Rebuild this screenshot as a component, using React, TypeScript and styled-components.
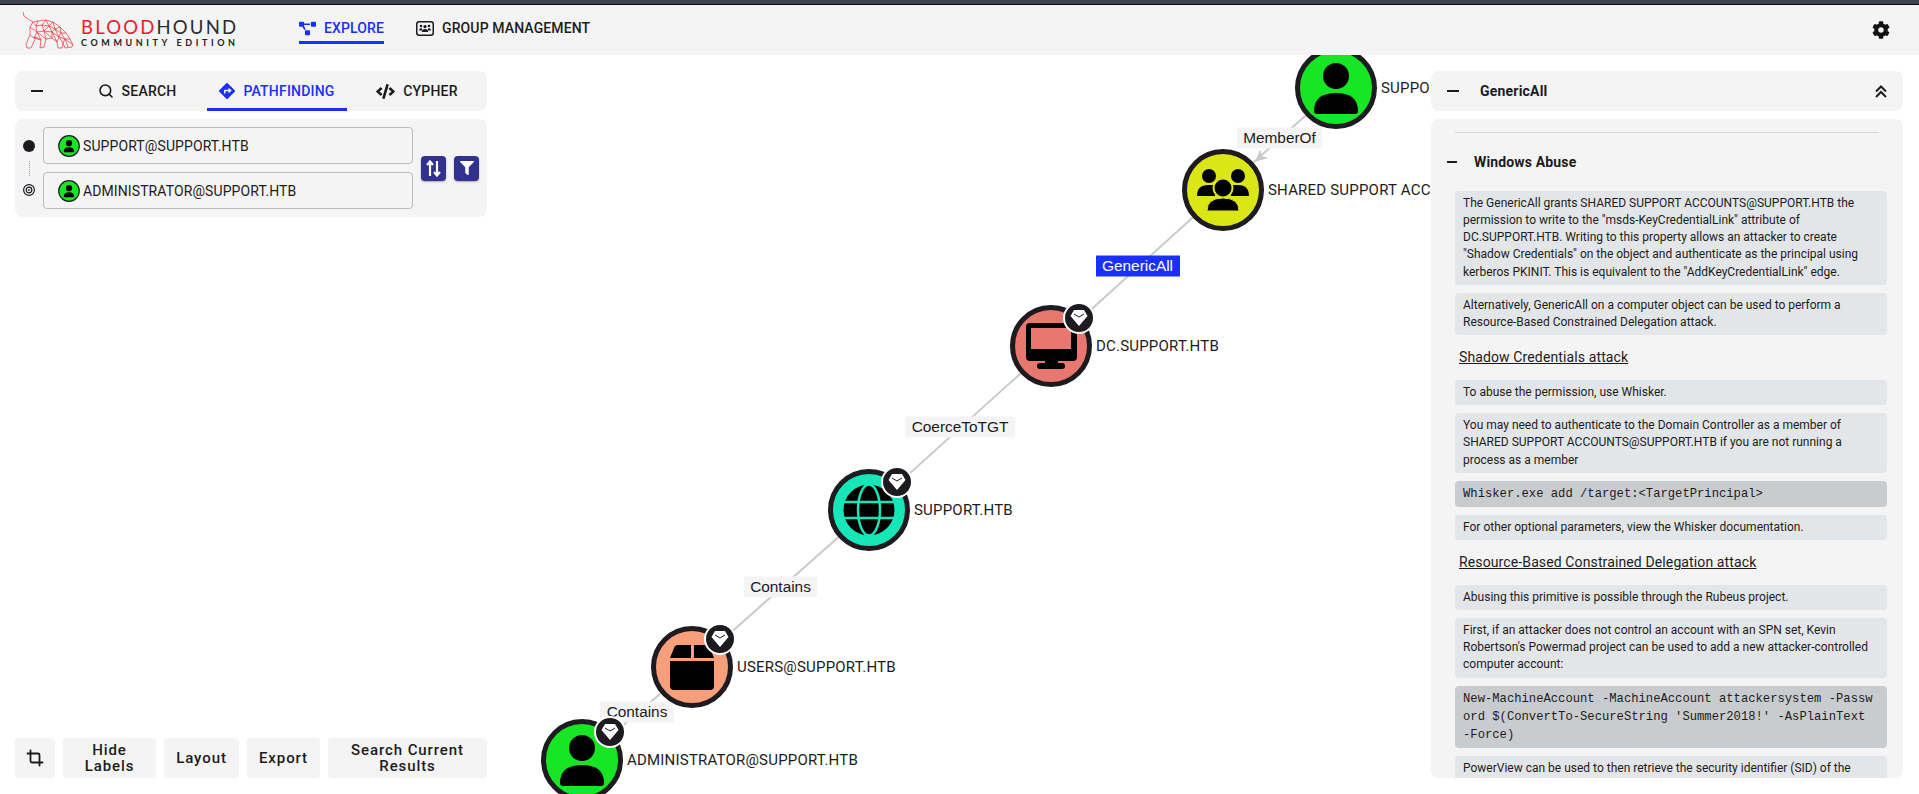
import React from 'react';
import styled, { createGlobalStyle } from 'styled-components';
import { FaCog, FaDirections, FaCode, FaProjectDiagram, FaFilter } from 'react-icons/fa';
import { Search, Crop } from 'lucide-react';

const Global = createGlobalStyle`
  html, body { margin: 0; padding: 0; background: #fff; }
  body { font-family: Roboto, "Liberation Sans", sans-serif; color: #1d1b20; }
  * { box-sizing: border-box; }
`;

const Page = styled.div`
  position: relative;
  width: 100%;
  height: 100vh;
  overflow: hidden;
  display: flex;
  flex-direction: column;
`;
const WindowEdge = styled.div`
  height: 5px;
  flex: none;
  background: #3f444c;
  border-bottom: 1px solid #0c0c0e;
`;
const Header = styled.header`
  height: 50px;
  flex: none;
  background: #f4f4f4;
  display: flex;
  align-items: center;
  position: relative;
  z-index: 5;
  padding: 0 29px 0 22px;
`;
const LogoBox = styled.div`
  display: flex;
  align-items: center;
  gap: 7px;
  width: 277px;
  flex: none;
  margin-top: -1px;
`;
const LogoText = styled.div`
  display: flex;
  flex-direction: column;
  margin-top: 6px;
  font-family: Lato, "Liberation Sans", sans-serif;
`;
const LogoMain = styled.div`
  font-size: 18.5px;
  line-height: 19px;
  letter-spacing: 2.2px;
  color: #2b2b2f;
  white-space: nowrap;
  span { color: #e8202e; }
`;
const LogoSub = styled.div`
  font-size: 9px;
  line-height: 11px;
  font-weight: 700;
  letter-spacing: 3.6px;
  color: #222;
  white-space: nowrap;
`;
const Nav = styled.nav`
  display: flex;
  align-items: stretch;
  align-self: flex-start;
  gap: 32px;
  height: 32px;
  margin-top: 7px;
  flex: 1;
`;
const NavItem = styled.div<{ $active?: boolean }>`
  display: flex;
  align-items: center;
  gap: 8px;
  padding-top: 3px;
  font-size: 14px;
  font-weight: 500;
  letter-spacing: 0.12px;
  white-space: nowrap;
  color: ${p => (p.$active ? '#1a30ff' : '#1d1b20')};
  border-bottom: 3px solid ${p => (p.$active ? '#1a30ff' : 'transparent')};
  svg { flex: none; }
`;
const GearSlot = styled.div`
  display: flex;
  align-items: center;
  color: #111;
  margin-top: -1px;
`;

const Stage = styled.main`
  position: relative;
  flex: 1;
  overflow: hidden;
`;
const EdgeLayer = styled.svg`
  position: absolute;
  left: 0;
  top: 0;
  width: 100%;
  height: 100%;
`;
const EdgeLabel = styled.div<{ $x: number; $y: number; $active?: boolean }>`
  position: absolute;
  left: ${p => p.$x}px;
  top: ${p => p.$y - 55}px;
  transform: translate(-50%, -50%);
  height: 21px;
  line-height: 20px;
  padding: 0 6.5px;
  font-family: "Liberation Sans", Arial, sans-serif;
  font-size: 15.4px;
  white-space: nowrap;
  background: ${p => (p.$active ? '#1a30ff' : '#f4f4f4')};
  color: ${p => (p.$active ? '#fff' : '#1d1b20')};
`;
const NodeWrap = styled.div<{ $x: number; $y: number }>`
  position: absolute;
  left: ${p => p.$x - 41}px;
  top: ${p => p.$y - 55 - 41}px;
  display: flex;
  align-items: center;
  gap: 4px;
`;
const NodeGlyph = styled.svg`
  width: 82px;
  height: 82px;
  flex: none;
  overflow: visible;
`;
const NodeLabel = styled.span`
  font-size: 15px;
  letter-spacing: 0.2px;
  white-space: nowrap;
  color: #1d1b20;
`;

const Column = styled.div<{ $side: 'left' | 'right' }>`
  position: absolute;
  top: 16px;
  bottom: 16px;
  width: 472px;
  ${p => (p.$side === 'left' ? 'left: 15px;' : 'right: 16px;')}
  display: flex;
  flex-direction: column;
  gap: 8px;
  z-index: 3;
`;
const Card = styled.div`
  background: #f4f4f4;
  border-radius: 8px;
`;
const TabBar = styled(Card)`
  height: 40px;
  flex: none;
  display: flex;
  align-items: stretch;
`;
const MinusSlot = styled.div`
  width: 52px;
  flex: none;
  display: flex;
  align-items: center;
  padding-left: 16px;
`;
const Dash = styled.span<{ $w: number }>`
  display: block;
  width: ${p => p.$w}px;
  height: 2px;
  background: #1d1b20;
`;
const Tab = styled.div<{ $active?: boolean }>`
  flex: 1;
  display: flex;
  align-items: center;
  justify-content: center;
  gap: 8px;
  font-size: 14px;
  font-weight: 500;
  letter-spacing: 0.2px;
  white-space: nowrap;
  color: ${p => (p.$active ? '#1a30ff' : '#1d1b20')};
  border-bottom: 3px solid ${p => (p.$active ? '#1a30ff' : 'transparent')};
  padding-top: 3px;
`;
const SearchCard = styled(Card)`
  flex: none;
  display: flex;
  align-items: center;
  padding: 8px 0;
`;
const Rail = styled.div`
  width: 28px;
  flex: none;
  display: flex;
  flex-direction: column;
  align-items: center;
  gap: 8.5px;
`;
const StartDot = styled.span`
  width: 12px;
  height: 12px;
  border-radius: 50%;
  background: #1d1b20;
`;
const RailLine = styled.span`
  width: 0;
  height: 15px;
  border-left: 1px dotted #a0a0a0;
`;
const Fields = styled.div`
  width: 370px;
  flex: none;
  display: flex;
  flex-direction: column;
  gap: 8px;
`;
const Field = styled.div`
  height: 37px;
  display: flex;
  align-items: center;
  gap: 3px;
  padding-left: 14px;
  border: 1px solid #bcbcbc;
  border-radius: 4px;
  font-size: 14px;
  letter-spacing: 0.1px;
  white-space: nowrap;
`;
const FieldIcon = styled.svg`
  width: 22px;
  height: 22px;
  flex: none;
`;
const Actions = styled.div`
  display: flex;
  gap: 8px;
  margin-left: 8px;
`;
const ActionBtn = styled.div`
  width: 25px;
  height: 25px;
  border-radius: 4px;
  background: #33318f;
  color: #fff;
  display: flex;
  align-items: center;
  justify-content: center;
  box-shadow: 0 1px 2px rgba(0, 0, 0, 0.3);
`;
const Spacer = styled.div`
  flex: 1;
`;
const Toolbar = styled.div`
  display: flex;
  gap: 8px;
  flex: none;
`;
const ToolBtn = styled.div<{ $w: number }>`
  width: ${p => p.$w}px;
  height: 40px;
  background: #f4f4f4;
  border-radius: 4px;
  display: flex;
  align-items: center;
  justify-content: center;
  text-align: center;
  font-size: 15px;
  font-weight: 500;
  line-height: 16px;
  letter-spacing: 0.9px;
  padding: 0 16px;
`;

const DetailHead = styled(Card)`
  height: 40px;
  flex: none;
  display: flex;
  align-items: center;
  padding: 0 16px;
  font-size: 14px;
  font-weight: 700;
  letter-spacing: 0.2px;
`;
const HeadTitle = styled.span`
  flex: 1;
  margin-left: 21px;
`;
const DetailBody = styled(Card)`
  flex: 1;
  min-height: 0;
  overflow: hidden;
  padding: 13px 16px 0 24px;
`;
const Divider = styled.div`
  height: 1px;
  background: #d5d5d5;
  margin-right: 8px;
`;
const SectionHead = styled.div`
  height: 58px;
  display: flex;
  align-items: center;
  gap: 17px;
  margin-left: -8px;
  font-size: 14px;
  font-weight: 700;
  letter-spacing: 0.15px;
`;
const Content = styled.div`
  display: flex;
  flex-direction: column;
  gap: 8px;
`;
const Para = styled.p`
  margin: 0;
  padding: 4px 8px;
  background: #e3e6e9;
  border-radius: 4px;
  font-size: 12px;
  line-height: 17.16px;
`;
const Code = styled.pre`
  margin: 0;
  padding: 4px 8px;
  background: #c9cccf;
  border-radius: 4px;
  font-family: "Liberation Mono", monospace;
  font-size: 12.2px;
  line-height: 18px;
  white-space: pre-wrap;
  word-break: break-all;
`;
const SubHeading = styled.div`
  height: 29px;
  line-height: 29px;
  padding-left: 4px;
  font-size: 14px;
  letter-spacing: 0.12px;
  text-decoration: underline;
`;

const UserShape = () => (
  <g fill="#000">
    <circle cx="0" cy="-12" r="13" />
    <path d="M-22 23 Q-22 5 0 5 Q22 5 22 23 Q22 26 19 26 H-19 Q-22 26 -22 23Z" />
  </g>
);
const GroupShape = ({ fill }: { fill: string }) => (
  <g fill="#000">
    <circle cx="-14" cy="-14" r="7" />
    <circle cx="15" cy="-14" r="7" />
    <path d="M-26 6 Q-26 -5 -15 -5 H-8 V6Z" />
    <path d="M26 6 Q26 -5 15 -5 H8 V6Z" />
    <circle cx="0" cy="-2" r="9.5" stroke={fill} strokeWidth="2" />
    <path d="M-16 21 Q-16 8 0 8 Q16 8 16 21 Z" stroke={fill} strokeWidth="1" />
  </g>
);
const MonitorShape = ({ fill }: { fill: string }) => (
  <g>
    <rect x="-25" y="-23" width="51" height="38" rx="4" fill="#000" />
    <rect x="-20" y="-18" width="40" height="21" fill={fill} />
    <rect x="-6" y="14" width="13" height="5" fill="#000" />
    <rect x="-14" y="17" width="28" height="6" rx="3" fill="#000" />
  </g>
);
const BoxShape = () => (
  <g fill="#000">
    <path d="M-22 -9 L-18 -19 Q-17 -22 -14 -22 H-1 V-9Z" />
    <path d="M2 -22 H14 Q17 -22 18 -19 L22 -9 H2Z" />
    <path d="M-22 -6 H22 V19 Q22 23 18 23 H-18 Q-22 23 -22 19Z" />
  </g>
);
const GlobeShape = ({ fill }: { fill: string }) => (
  <g>
    <circle cx="0" cy="0" r="25.5" fill="#000" />
    <ellipse cx="0" cy="0" rx="11" ry="25.5" fill="none" stroke={fill} strokeWidth="2.5" />
    <path d="M-26 -8 H26 M-26 8 H26" stroke={fill} strokeWidth="2.5" />
  </g>
);
const Badge = () => (
  <g transform="translate(28 -28)">
    <circle r="15" fill="#1d1b20" stroke="#fff" strokeWidth="2" />
    <path d="M-5 -8 H5 L8.5 -2 L0 8 L-8.5 -2Z" fill="#fff" />
    <path d="M-5 -4 L0 -1 L5 -4" fill="none" stroke="#1d1b20" strokeWidth="1" />
  </g>
);

type NodeKind = 'user' | 'group' | 'computer' | 'domain' | 'container';
const COLORS: Record<NodeKind, string> = {
  user: '#17e625',
  group: '#dbe617',
  computer: '#e8776f',
  domain: '#17e6b9',
  container: '#f79e7b',
};
const shapeFor = (kind: NodeKind) => {
  const fill = COLORS[kind];
  if (kind === 'user') return <UserShape />;
  if (kind === 'group') return <GroupShape fill={fill} />;
  if (kind === 'computer') return <MonitorShape fill={fill} />;
  if (kind === 'domain') return <GlobeShape fill={fill} />;
  return <BoxShape />;
};

const NODES: { x: number; y: number; kind: NodeKind; label: string; tier0?: boolean }[] = [
  { x: 1336, y: 88, kind: 'user', label: 'SUPPORT@SUPPORT.HTB' },
  { x: 1223, y: 190, kind: 'group', label: 'SHARED SUPPORT ACCOUNTS@SUPPORT.HTB' },
  { x: 1051, y: 346, kind: 'computer', label: 'DC.SUPPORT.HTB', tier0: true },
  { x: 869, y: 510, kind: 'domain', label: 'SUPPORT.HTB', tier0: true },
  { x: 692, y: 667, kind: 'container', label: 'USERS@SUPPORT.HTB', tier0: true },
  { x: 582, y: 760, kind: 'user', label: 'ADMINISTRATOR@SUPPORT.HTB', tier0: true },
];
const EDGE_LABELS: { x: number; y: number; text: string; active?: boolean }[] = [
  { x: 1279.5, y: 137.5, text: 'MemberOf' },
  { x: 1137.5, y: 266, text: 'GenericAll', active: true },
  { x: 960, y: 426.5, text: 'CoerceToTGT' },
  { x: 780.5, y: 586.5, text: 'Contains' },
  { x: 637, y: 711.5, text: 'Contains' },
];

const LOGO_MESH =
  'M1 1L2 5L6 8L11 11L16 10L24 9L31 11L38 16L44 22L48 28L51 34L50 36L43 37L41 32L40 37L36 37L35 31L30 27L24 28L22 36L18 37L19 29L14 26L9 37L5 37L4 33L8 24L8 16L11 11 ' +
  'M11 11L14 15L20 14L27 15L33 18L39 22L43 28L37 26L30 21L22 20L15 21L12 27L8 24 M16 10L14 15L15 21L8 16 M24 9L20 14L22 20L27 15L24 9 M31 11L27 15L30 21L33 18L31 11 M38 16L33 18L37 26L39 22L38 16 M44 22L39 22 M48 28L43 28L41 32L37 26L35 31L30 21L30 27L22 20L24 28L15 21L19 29L12 27L14 26 M43 28L46 36 M43 28L51 34';

const Logo = () => (
  <svg width="52" height="38" viewBox="0 0 52 38" fill="none" stroke="#e8303a" strokeWidth="0.7">
    <path d={LOGO_MESH} />
  </svg>
);
const GroupMgmtIcon = () => (
  <svg width="18" height="15" viewBox="0 0 18 15">
    <rect x="0.75" y="0.75" width="16.5" height="13.5" rx="2.5" fill="none" stroke="#1d1b20" strokeWidth="1.5" />
    <g fill="#1d1b20">
      <circle cx="5" cy="5" r="1.3" />
      <circle cx="13" cy="5" r="1.3" />
      <circle cx="9" cy="5.6" r="1.6" />
      <path d="M3 9.5 Q3 7.2 5 7.2 H6 V9.5Z" />
      <path d="M15 9.5 Q15 7.2 13 7.2 H12 V9.5Z" />
      <path d="M5.8 11 Q5.8 8 9 8 Q12.2 8 12.2 11Z" />
    </g>
  </svg>
);
const SwapIcon = () => (
  <svg width="15" height="17" viewBox="0 0 15 17" fill="none" stroke="#fff" strokeWidth="2.2">
    <path d="M4 16V2 M1 5L4 1.5L7 5" />
    <path d="M11 1V15 M8 12L11 15.5L14 12" />
  </svg>
);
const ChevronsUp = () => (
  <svg width="12" height="13" viewBox="0 0 12 13" fill="none" stroke="#1d1b20" strokeWidth="2">
    <path d="M1 6.5L6 1.5L11 6.5" />
    <path d="M1 12L6 7L11 12" />
  </svg>
);
const TargetIcon = () => (
  <svg width="12" height="12" viewBox="0 0 12 12" fill="none" stroke="#1d1b20">
    <circle cx="6" cy="6" r="5.4" strokeWidth="1.2" />
    <circle cx="6" cy="6" r="2.8" strokeWidth="1.2" />
    <circle cx="6" cy="6" r="0.9" fill="#1d1b20" stroke="none" />
  </svg>
);
const UserChip = () => (
  <FieldIcon viewBox="-46 -46 92 92">
    <circle r="43" fill="#17e625" stroke="#1d1b20" strokeWidth="5" />
    <UserShape />
  </FieldIcon>
);

export default function App() {
  return (
    <Page>
      <Global />
      <WindowEdge />
      <Header>
        <LogoBox>
          <Logo />
          <LogoText>
            <LogoMain>
              <span>BLOOD</span>HOUND
            </LogoMain>
            <LogoSub>COMMUNITY EDITION</LogoSub>
          </LogoText>
        </LogoBox>
        <Nav>
          <NavItem $active>
            <FaProjectDiagram size={17} />
            EXPLORE
          </NavItem>
          <NavItem>
            <GroupMgmtIcon />
            GROUP MANAGEMENT
          </NavItem>
        </Nav>
        <GearSlot>
          <FaCog size={18} />
        </GearSlot>
      </Header>

      <Stage>
        <EdgeLayer viewBox="0 55 1919 739" preserveAspectRatio="xMinYMin slice">
          <g stroke="#cacaca" strokeWidth="2">
            {NODES.slice(0, -1).map((n, i) => (
              <line key={n.label} x1={n.x} y1={n.y} x2={NODES[i + 1].x} y2={NODES[i + 1].y} />
            ))}
          </g>
          <polygon points="1255,162 1268,158 1262,156 1260,149.6" fill="#cacaca" />
        </EdgeLayer>
        {EDGE_LABELS.map(l => (
          <EdgeLabel key={`${l.text}${l.x}`} $x={l.x} $y={l.y} $active={l.active}>
            {l.text}
          </EdgeLabel>
        ))}
        {NODES.map(n => (
          <NodeWrap key={n.label} $x={n.x} $y={n.y}>
            <NodeGlyph viewBox="-41 -41 82 82">
              <circle r="38.5" fill={COLORS[n.kind]} stroke="#1d1b20" strokeWidth="5" />
              {shapeFor(n.kind)}
              {n.tier0 && <Badge />}
            </NodeGlyph>
            <NodeLabel>{n.label}</NodeLabel>
          </NodeWrap>
        ))}

        <Column $side="left">
          <TabBar>
            <MinusSlot>
              <Dash $w={12} />
            </MinusSlot>
            <Tab>
              <Search size={16} strokeWidth={2.4} />
              SEARCH
            </Tab>
            <Tab $active>
              <FaDirections size={16} />
              PATHFINDING
            </Tab>
            <Tab>
              <FaCode size={19} />
              CYPHER
            </Tab>
          </TabBar>
          <SearchCard>
            <Rail>
              <StartDot />
              <RailLine />
              <TargetIcon />
            </Rail>
            <Fields>
              <Field>
                <UserChip />
                SUPPORT@SUPPORT.HTB
              </Field>
              <Field>
                <UserChip />
                ADMINISTRATOR@SUPPORT.HTB
              </Field>
            </Fields>
            <Actions>
              <ActionBtn>
                <SwapIcon />
              </ActionBtn>
              <ActionBtn>
                <FaFilter size={14} />
              </ActionBtn>
            </Actions>
          </SearchCard>
          <Spacer />
          <Toolbar>
            <ToolBtn $w={40}>
              <Crop size={18} strokeWidth={2.4} style={{ flex: 'none' }} />
            </ToolBtn>
            <ToolBtn $w={93}>Hide Labels</ToolBtn>
            <ToolBtn $w={75}>Layout</ToolBtn>
            <ToolBtn $w={73}>Export</ToolBtn>
            <ToolBtn $w={159}>Search Current Results</ToolBtn>
          </Toolbar>
        </Column>

        <Column $side="right">
          <DetailHead>
            <Dash $w={12} />
            <HeadTitle>GenericAll</HeadTitle>
            <ChevronsUp />
          </DetailHead>
          <DetailBody>
            <Divider />
            <SectionHead>
              <Dash $w={10} />
              Windows Abuse
            </SectionHead>
            <Content>
              <Para>
                The GenericAll grants SHARED SUPPORT ACCOUNTS@SUPPORT.HTB the permission to write to the
                "msds-KeyCredentialLink" attribute of DC.SUPPORT.HTB. Writing to this property allows an attacker
                to create "Shadow Credentials" on the object and authenticate as the principal using kerberos
                PKINIT. This is equivalent to the "AddKeyCredentialLink" edge.
              </Para>
              <Para>
                Alternatively, GenericAll on a computer object can be used to perform a Resource-Based Constrained
                Delegation attack.
              </Para>
              <SubHeading>Shadow Credentials attack</SubHeading>
              <Para>To abuse the permission, use Whisker.</Para>
              <Para>
                You may need to authenticate to the Domain Controller as a member of SHARED SUPPORT
                ACCOUNTS@SUPPORT.HTB if you are not running a process as a member
              </Para>
              <Code>{'Whisker.exe add /target:<TargetPrincipal>'}</Code>
              <Para>For other optional parameters, view the Whisker documentation.</Para>
              <SubHeading>Resource-Based Constrained Delegation attack</SubHeading>
              <Para>Abusing this primitive is possible through the Rubeus project.</Para>
              <Para>
                First, if an attacker does not control an account with an SPN set, Kevin Robertson's Powermad
                project can be used to add a new attacker-controlled computer account:
              </Para>
              <Code>
                {"New-MachineAccount -MachineAccount attackersystem -Password $(ConvertTo-SecureString 'Summer2018!' -AsPlainText -Force)"}
              </Code>
              <Para>
                PowerView can be used to then retrieve the security identifier (SID) of the newly created computer
                account:
              </Para>
            </Content>
          </DetailBody>
        </Column>
      </Stage>
    </Page>
  );
}
